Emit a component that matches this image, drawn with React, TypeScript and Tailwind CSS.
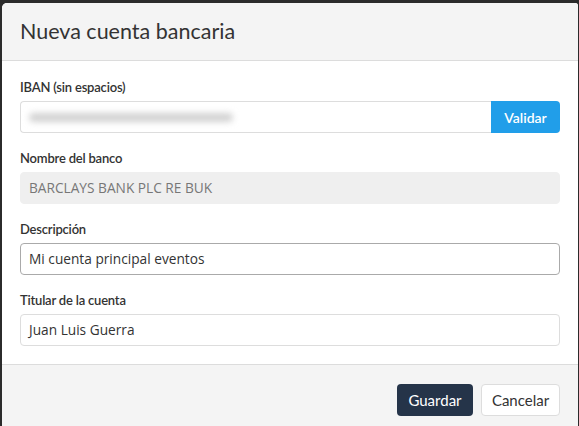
const font = { fontFamily: "Lato, 'Open Sans', sans-serif" };
const inputFont = { fontFamily: "'Open Sans', 'Noto Sans', sans-serif" };

const Label = ({ children }: { children: React.ReactNode }) => (
  <label className="block text-[13px] leading-[18px] font-semibold text-[#333] mb-[5px] tracking-[-0.2px]">
    {children}
  </label>
);

export default function App() {
  return (
    <div className="h-[426px] w-[579px] bg-[#2b2b2b] overflow-hidden pt-[3px] pl-[2px] pr-[1px]" style={font}>
      <div className="bg-white rounded-tl-[5px] rounded-tr-[3px] h-[430px] flex flex-col overflow-hidden">
        <div className="h-[58px] bg-[#f4f4f4] border-b border-[#dcdcdc] flex items-center px-[18px]">
          <h1 className="text-[21.5px] text-[#333] font-normal -mt-[1px]">Nueva cuenta bancaria</h1>
        </div>

        <div className="px-[18px] pt-[17px] pb-[2px]">
          <div className="mb-[16px]">
            <Label>IBAN (sin espacios)</Label>
            <div className="flex h-[32px]">
              <div className="flex-1 border border-[#ddd] border-r-0 rounded-l-[4px] flex items-center px-[8px]">
                <div className="h-[9px] w-[204px] bg-[#d2d2d2] rounded-full blur-[3px]" />
              </div>
              <button className="w-[69px] bg-[#219ee9] text-white text-[14px] font-semibold rounded-r-[4px]">
                Validar
              </button>
            </div>
          </div>

          <div className="mb-[16px]">
            <Label>Nombre del banco</Label>
            <div
              className="h-[32px] bg-[#efefef] border border-[#efefef] rounded-[4px] flex items-center px-[8px] text-[13.7px] text-[#777]"
              style={inputFont}
            >
              BARCLAYS BANK PLC RE BUK
            </div>
          </div>

          <div className="mb-[16px]">
            <Label>Descripción</Label>
            <div
              className="h-[32px] border border-[#aaa] rounded-[4px] flex items-center px-[8px] text-[13.7px] text-[#333]"
              style={inputFont}
            >
              Mi cuenta principal eventos
            </div>
          </div>

          <div className="mb-[16px]">
            <Label>Titular de la cuenta</Label>
            <div
              className="h-[32px] border border-[#ddd] rounded-[4px] flex items-center px-[8px] text-[13.7px] text-[#333]"
              style={inputFont}
            >
              Juan Luis Guerra
            </div>
          </div>
        </div>

        <div className="flex-1 bg-[#f4f4f4] border-t border-[#dcdcdc] flex justify-end items-start gap-[8px] pt-[19px] pr-[18px]">
          <button className="h-[32px] w-[76px] bg-[#253449] text-white text-[15px] rounded-[4px]">
            Guardar
          </button>
          <button className="h-[32px] w-[79px] bg-white border border-[#ddd] text-[#333] text-[15px] rounded-[4px]">
            Cancelar
          </button>
        </div>
      </div>
    </div>
  );
}
